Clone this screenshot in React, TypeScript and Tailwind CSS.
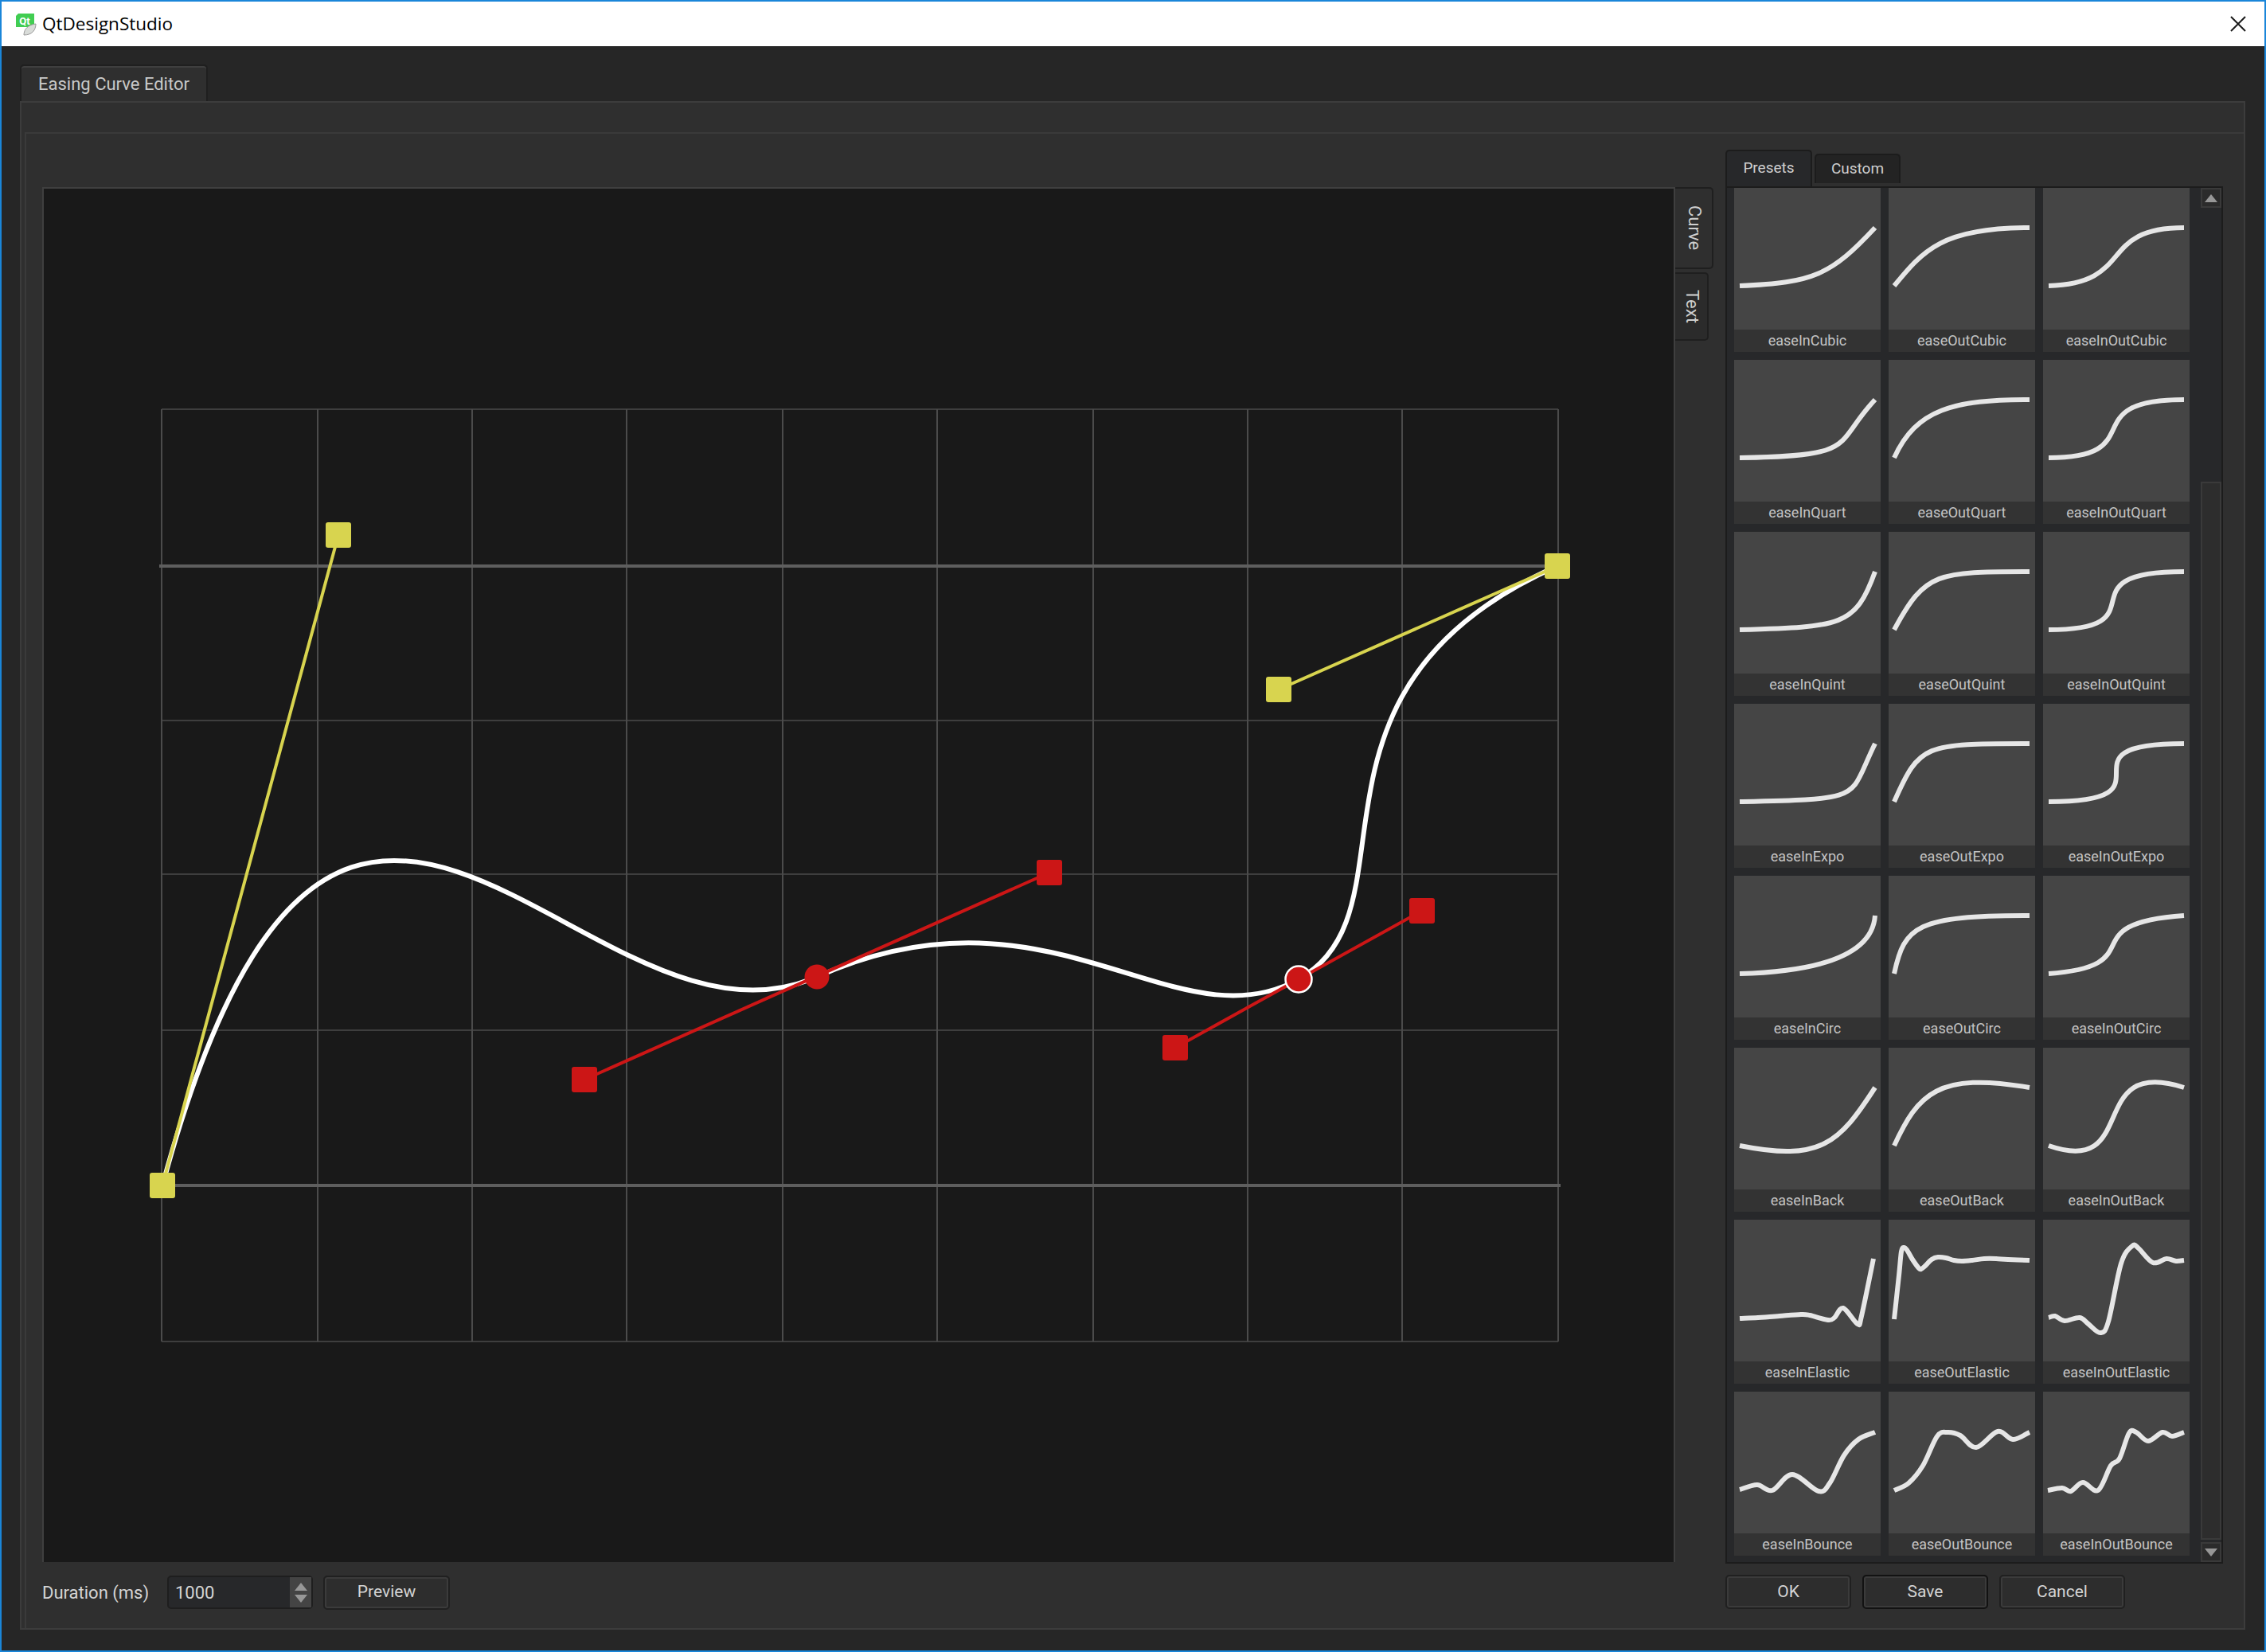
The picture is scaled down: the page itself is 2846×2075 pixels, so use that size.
const ROW_H = 178;

// preset curves are cubic beziers, drawn in thumbnail pixels
function bez(x1: number, y1: number, x2: number, y2: number) {
  const px = (x: number) => (7 + x * 170).toFixed(1);
  const py = (y: number) => (123 - y * 73).toFixed(1);
  return `M7,123 C${px(x1)},${py(y1)} ${px(x2)},${py(y2)} 177,50`;
}

// traced curves (elastic and bounce), smoothed with catmull-rom
function smooth(p: number[][]) {
  let d = `M${p[0][0]},${p[0][1]}`;
  for (let i = 0; i < p.length - 1; i++) {
    const a = p[Math.max(i - 1, 0)];
    const b = p[i];
    const c = p[i + 1];
    const e = p[Math.min(i + 2, p.length - 1)];
    d += ` C${(b[0] + (c[0] - a[0]) / 6).toFixed(1)},${(b[1] + (c[1] - a[1]) / 6).toFixed(1)} ${(c[0] - (e[0] - b[0]) / 6).toFixed(1)},${(c[1] - (e[1] - b[1]) / 6).toFixed(1)} ${c[0]},${c[1]}`;
  }
  return d;
}

const presets: { name: string; d: string }[] = [
  { name: "easeInCubic", d: bez(0.55, 0.055, 0.675, 0.19) },
  { name: "easeOutCubic", d: bez(0.215, 0.61, 0.355, 1) },
  { name: "easeInOutCubic", d: bez(0.645, 0.045, 0.355, 1) },
  { name: "easeInQuart", d: bez(0.895, 0.03, 0.685, 0.22) },
  { name: "easeOutQuart", d: bez(0.165, 0.84, 0.44, 1) },
  { name: "easeInOutQuart", d: bez(0.77, 0, 0.175, 1) },
  { name: "easeInQuint", d: bez(0.755, 0.05, 0.855, 0.06) },
  { name: "easeOutQuint", d: bez(0.23, 1, 0.32, 1) },
  { name: "easeInOutQuint", d: bez(0.86, 0, 0.07, 1) },
  { name: "easeInExpo", d: bez(0.95, 0.05, 0.795, 0.035) },
  { name: "easeOutExpo", d: bez(0.19, 1, 0.22, 1) },
  { name: "easeInOutExpo", d: bez(1, 0, 0, 1) },
  { name: "easeInCirc", d: bez(0.6, 0.04, 0.98, 0.335) },
  { name: "easeOutCirc", d: bez(0.075, 0.82, 0.165, 1) },
  { name: "easeInOutCirc", d: bez(0.785, 0.135, 0.15, 0.86) },
  { name: "easeInBack", d: bez(0.6, -0.28, 0.735, 0.045) },
  { name: "easeOutBack", d: bez(0.175, 0.885, 0.32, 1.275) },
  { name: "easeInOutBack", d: bez(0.68, -0.55, 0.265, 1.55) },
  {
    name: "easeInElastic",
    d: smooth([[7, 124], [30, 123], [57, 121], [84, 119], [95, 120], [118, 126], [126, 123], [137, 111], [155, 131], [160, 121], [175, 49]]),
  },
  {
    name: "easeOutElastic",
    d: smooth([[7, 125], [13, 70], [16, 40], [19, 35], [23, 38], [30, 50], [38, 61], [41, 62], [46, 58], [54, 50], [62, 47], [72, 48], [82, 51], [92, 52], [105, 51], [120, 49], [135, 49], [150, 50], [177, 51]]),
  },
  {
    name: "easeInOutElastic",
    d: smooth([[7, 123], [15, 121], [27, 127], [46, 123], [57, 131], [72, 142], [82, 128], [98, 55], [112, 33], [120, 36], [138, 54], [155, 49], [167, 52], [177, 51]]),
  },
  {
    name: "easeInBounce",
    d: smooth([[7, 123], [29, 117], [48, 124], [73, 104], [106, 125], [120, 115], [138, 80], [156, 60], [177, 51]]),
  },
  {
    name: "easeOutBounce",
    d: smooth([[7, 124], [25, 115], [43, 93], [61, 56], [74, 51], [90, 55], [110, 70], [137, 50], [156, 60], [177, 51]]),
  },
  {
    name: "easeInOutBounce",
    d: smooth([[6, 124], [24, 121], [35, 125], [50, 114], [69, 124], [85, 93], [96, 84], [108, 52], [117, 51], [132, 62], [150, 51], [162, 56], [177, 51]]),
  },
];

function PresetCell({ name, d }: { name: string; d: string }) {
  return (
    <div className="flex h-[206px] w-[184px] flex-col bg-[#333333]">
      <svg width="184" height={ROW_H} className="block bg-[#454545]">
        <path d={d} fill="none" stroke="#e6e6e6" strokeWidth="6" strokeLinejoin="round" />
      </svg>
      <div className="flex flex-1 items-center justify-center text-[18px] leading-none text-[#c4c4c4]">{name}</div>
    </div>
  );
}

function Handle({ x, y, fill }: { x: number; y: number; fill: string }) {
  return <rect x={x - 16} y={y - 16} width="32" height="32" rx="3" fill={fill} />;
}

function EasingGraph() {
  const vLines = [203, 399, 593, 787, 983, 1177, 1373, 1567, 1761, 1957];
  const hLines = [514, 905, 1098, 1294, 1685];
  const yellow = "#d8d44f";
  const red = "#cc1616";
  return (
    <svg viewBox="55 237 2047 1725" className="block h-full w-full">
      {vLines.map((x) => (
        <line key={x} x1={x} y1="514" x2={x} y2="1685" stroke="#4b4b4b" strokeWidth="2" />
      ))}
      {hLines.map((y) => (
        <line key={y} x1="203" y1={y} x2="1957" y2={y} stroke="#4b4b4b" strokeWidth="1.5" />
      ))}
      <line x1="200" y1="711" x2="1960" y2="711" stroke="#5e5e5e" strokeWidth="4" />
      <line x1="200" y1="1489" x2="1960" y2="1489" stroke="#5e5e5e" strokeWidth="4" />
      <path
        d="M204,1489 C425,672 734,1356 1026,1227 C1318,1096 1476,1316 1631,1230 C1786,1144 1606,866 1956,711"
        fill="none"
        stroke="#ffffff"
        strokeWidth="6"
      />
      <line x1="204" y1="1489" x2="425" y2="672" stroke={yellow} strokeWidth="4" />
      <line x1="1606" y1="866" x2="1956" y2="711" stroke={yellow} strokeWidth="4" />
      <line x1="734" y1="1356" x2="1318" y2="1096" stroke={red} strokeWidth="4" />
      <line x1="1476" y1="1316" x2="1786" y2="1144" stroke={red} strokeWidth="4" />
      <circle cx="1026" cy="1227" r="15.5" fill={red} />
      <circle cx="1631" cy="1230" r="16.5" fill={red} stroke="#ffffff" strokeWidth="2.5" />
      <Handle x={204} y={1489} fill={yellow} />
      <Handle x={425} y={672} fill={yellow} />
      <Handle x={1606} y={866} fill={yellow} />
      <Handle x={1956} y={711} fill={yellow} />
      <Handle x={734} y={1356} fill={red} />
      <Handle x={1318} y={1096} fill={red} />
      <Handle x={1476} y={1316} fill={red} />
      <Handle x={1786} y={1144} fill={red} />
    </svg>
  );
}

function PushButton({ label, dark, className }: { label: string; dark?: boolean; className?: string }) {
  return (
    <div
      className={`flex h-[43px] items-center justify-center rounded-[5px] border-2 bg-[#2d2d2d] text-[21px] text-[#d4d4d4] shadow-[inset_0_0_0_2px_#3b3b3b] ${
        dark ? "border-[#121212]" : "border-[#202020]"
      } ${className ?? ""}`}
    >
      {label}
    </div>
  );
}

function Triangle({ down, className }: { down?: boolean; className?: string }) {
  return (
    <svg width="16" height="10" viewBox="0 0 16 10" className={className}>
      <path d={down ? "M0,0 L16,0 L8,10 Z" : "M8,0 L16,10 L0,10 Z"} fill="#979797" />
    </svg>
  );
}

function QtLogo() {
  return (
    <svg width="28" height="30" viewBox="0 0 28 30" className="shrink-0">
      <path d="M5,2 H25 V15 L21,19 H2 V5 Z" fill="#41cd52" />
      <text x="13" y="15.5" textAnchor="middle" fontFamily="Roboto, sans-serif" fontWeight="700" fontSize="13" fill="#ffffff">
        Qt
      </text>
      <path d="M12,29 C12,21 18,16 27,15 C27,23 22,29 12,29 Z" fill="#d9dcd9" stroke="#9a9a9a" strokeWidth="1" />
    </svg>
  );
}

export default function App() {
  return (
    <div className="flex h-[2075px] w-[2846px] flex-col border-2 border-[#1a86d9] bg-[#262626] font-['Roboto',sans-serif]">
      <div className="flex h-[56px] shrink-0 items-center bg-white pl-[16px] pr-[23px]">
        <QtLogo />
        <span className="ml-[7px] font-['Open_Sans',sans-serif] text-[22.5px] text-black">QtDesignStudio</span>
        <svg width="20" height="20" viewBox="0 0 20 20" className="ml-auto">
          <path d="M1,1 L19,19 M19,1 L1,19" stroke="#1a1a1a" strokeWidth="2" />
        </svg>
      </div>

      <div className="flex min-h-0 flex-1 flex-col pb-[26px] pl-[23px] pr-[24px] pt-[23px]">
        <div className="flex h-[46px] shrink-0">
          <div className="flex w-[236px] items-center justify-center rounded-t-[5px] border-2 border-b-0 border-[#1f1f1f] bg-[#2f2f2f] text-[22px] text-[#c9c9c9] shadow-[inset_0_2px_0_#3f3f3f]">
            Easing Curve Editor
          </div>
        </div>

        <div className="flex min-h-0 flex-1 flex-col border-2 border-t-2 border-[#3c3c3c] bg-[#2f2f2f] pl-[4px] pt-[37px]">
          <div className="flex min-h-0 flex-1 gap-[15px] border-l-2 border-t-2 border-[#3a3a3a] pl-[20px]">
            {/* graph side */}
            <div className="flex w-[2099px] flex-col pt-[67px]">
              <div className="flex h-[1727px]">
                <div className="h-full w-[2051px] border-x-2 border-t-2 border-[#3f3f3f] bg-[#191919]">
                  <EasingGraph />
                </div>
                <div className="flex flex-col">
                  <div className="flex h-[103px] w-[48px] items-center justify-center rounded-r-[5px] border-2 border-l-0 border-[#1f1f1f] bg-[#2f2f2f] pl-[2px] text-[22px] text-[#cfcfcf] [writing-mode:vertical-rl]">
                    Curve
                  </div>
                  <div className="mt-[4px] flex h-[86px] w-[42px] items-center justify-center rounded-r-[5px] border-2 border-l-0 border-[#1f1f1f] bg-[#2b2b2b] pl-[2px] text-[22px] text-[#cfcfcf] [writing-mode:vertical-rl]">
                    Text
                  </div>
                </div>
              </div>
              <div className="mt-[16px] flex h-[44px] items-center">
                <span className="w-[157px] text-[22px] text-[#d4d4d4]">Duration (ms)</span>
                <div className="flex h-[42px] w-[183px] rounded-[5px] border-2 border-[#1e1e1e] bg-[#27282a] pl-[8px] text-[22px] text-[#d4d4d4]">
                  <span className="flex-1 self-center">1000</span>
                  <div className="flex w-[27px] flex-col items-center justify-center gap-[5px] bg-[#444444]">
                    <Triangle />
                    <Triangle down />
                  </div>
                </div>
                <PushButton label="Preview" className="ml-[13px] w-[159px]" />
              </div>
            </div>

            {/* presets side */}
            <div className="flex w-[625px] flex-col pt-[20px]">
              <div className="flex h-[46px] shrink-0 items-start gap-[3px]">
                <div className="flex h-[46px] w-[109px] items-center justify-center rounded-t-[5px] border-2 border-b-0 border-[#1c1c1c] bg-[#27282a] pb-[2px] text-[19px] text-[#cfcfcf]">
                  Presets
                </div>
                <div className="mt-[5px] flex h-[37px] w-[108px] items-center justify-center rounded-t-[5px] border-2 border-b-0 border-[#1c1c1c] bg-[#232323] text-[19px] text-[#cfcfcf]">
                  Custom
                </div>
              </div>
              <div className="flex h-[1730px] shrink-0 overflow-hidden border-2 border-[#1c1c1c] bg-[#27282a] pl-[9px]">
                <div className="grid grid-cols-[184px_184px_184px] content-start gap-[10px]">
                  {presets.map((p) => (
                    <PresetCell key={p.name} name={p.name} d={p.d} />
                  ))}
                </div>
                <div className="ml-auto flex w-[26px] flex-col">
                  <div className="flex h-[25px] items-center justify-center border-2 border-[#3a3a3a] bg-[#2b2b2b]">
                    <Triangle />
                  </div>
                  <div className="h-[344px]" />
                  <div className="min-h-0 flex-1 border-2 border-[#3a3a3a] bg-[#2d2d2d]" />
                  <div className="mt-[3px] flex h-[25px] items-center justify-center border-2 border-[#3a3a3a] bg-[#2b2b2b]">
                    <Triangle down />
                  </div>
                </div>
              </div>
              <div className="mt-[14px] flex gap-[14px]">
                <PushButton label="OK" className="w-[158px]" />
                <PushButton label="Save" dark className="w-[158px]" />
                <PushButton label="Cancel" className="w-[158px]" />
              </div>
            </div>
          </div>
        </div>
      </div>
    </div>
  );
}
